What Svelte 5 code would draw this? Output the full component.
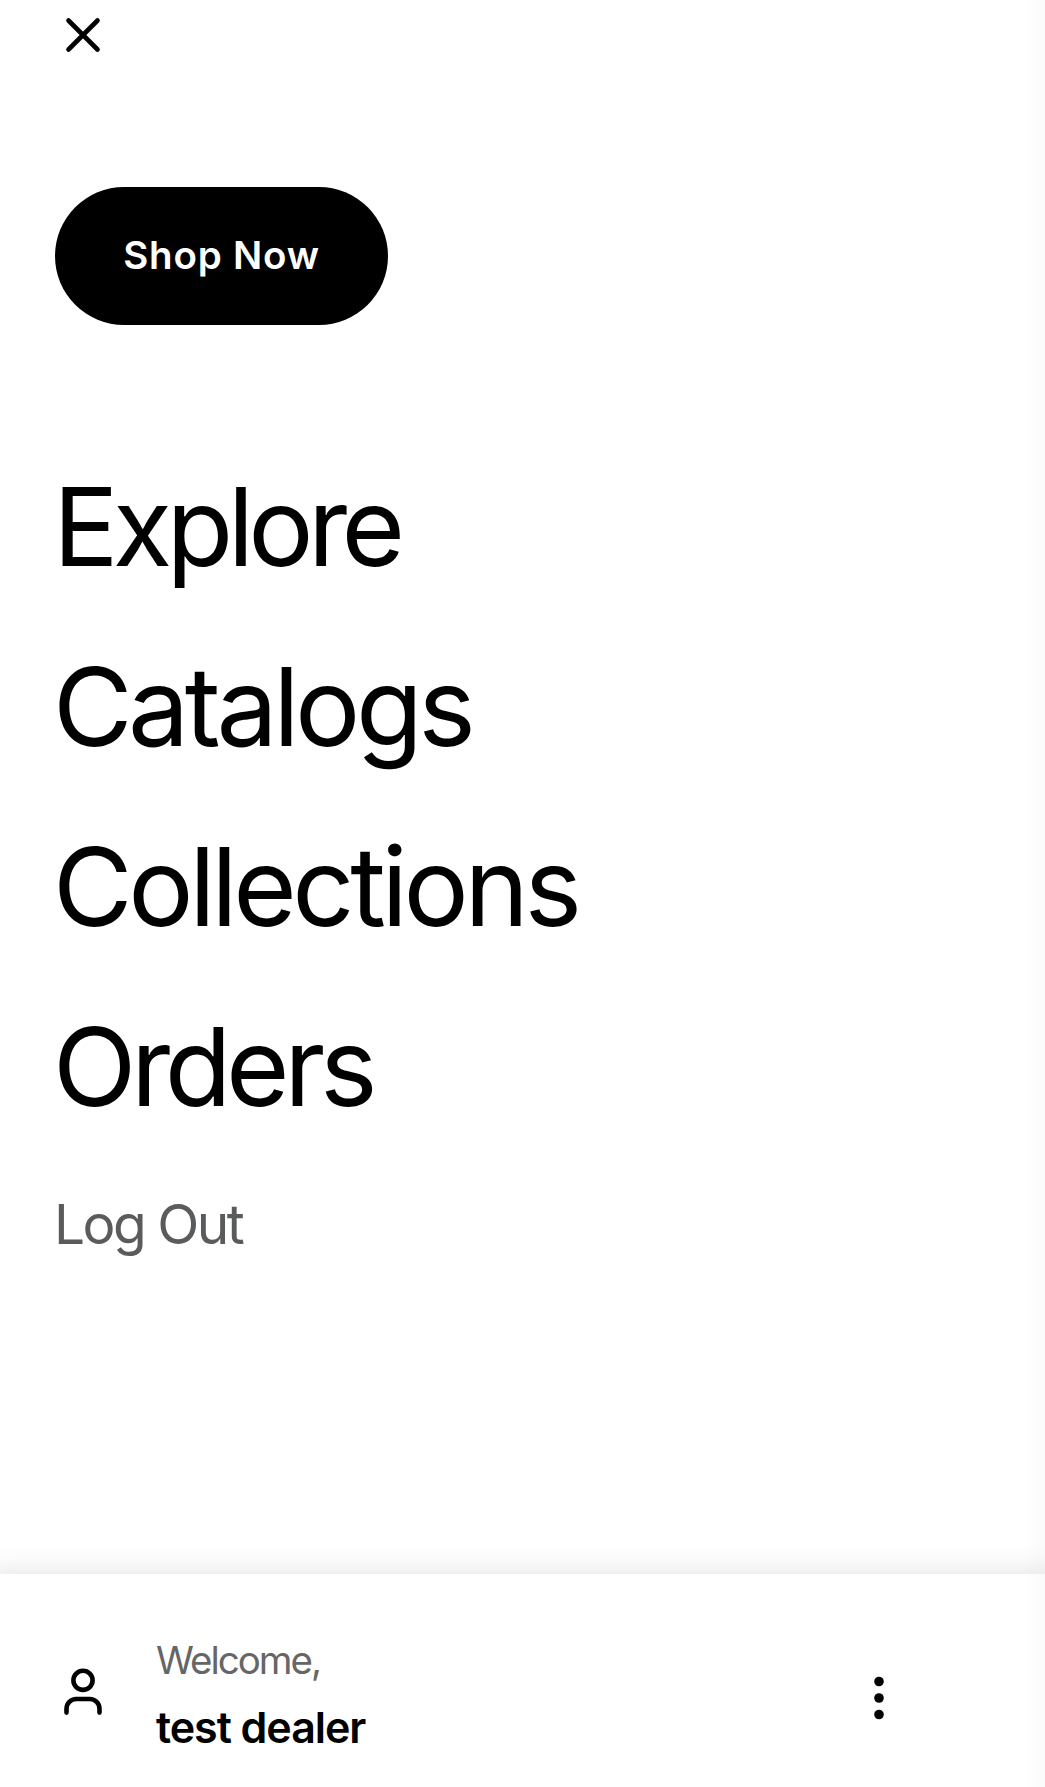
<script>
  const links = [
    { label: 'Explore', tracking: -5.7 },
    { label: 'Catalogs', tracking: -4.5 },
    { label: 'Collections', tracking: -4.4 },
    { label: 'Orders', tracking: -5.4 },
  ];
</script>

<div class="drawer">
  <header>
    <button class="icon" aria-label="Close menu">
      <svg width="66" height="66" viewBox="0 0 66 66" fill="none" stroke="#000" stroke-width="4.6" stroke-linecap="round">
        <path d="M18.5 18.5 47.5 47.5M47.5 18.5 18.5 47.5" />
      </svg>
    </button>
  </header>

  <main>
    <button class="shop"><span>Shop Now</span></button>
    <nav>
      {#each links as link}
        <a href="#{link.label.toLowerCase()}" style:letter-spacing="{link.tracking}px">{link.label}</a>
      {/each}
    </nav>
    <a class="logout" href="#logout">Log Out</a>
  </main>

  <footer>
    <svg class="user" width="66" height="66" viewBox="0 0 66 66" fill="none" stroke="#000" stroke-width="4.6" stroke-linecap="round">
      <circle cx="33" cy="20.3" r="9.6" />
      <path d="M16.5 52.6V48.7A9.7 9.7 0 0 1 26.2 39H39.8A9.7 9.7 0 0 1 49.5 48.7V52.6" />
    </svg>
    <div class="who">
      <span class="hello">Welcome,</span>
      <span class="name">test dealer</span>
    </div>
    <button class="icon more" aria-label="More options">
      <svg width="66" height="66" viewBox="0 0 66 66">
        <circle cx="33" cy="16.5" r="4.8" />
        <circle cx="33" cy="33" r="4.8" />
        <circle cx="33" cy="49.5" r="4.8" />
      </svg>
    </button>
  </footer>
  <div class="edge"></div>
</div>

<style>
  .drawer {
    position: relative;
    box-sizing: border-box;
    display: flex;
    flex-direction: column;
    height: 1787px;
    overflow: hidden;
    background: #fff;
    color: #000;
    font-family: Inter, 'Liberation Sans', sans-serif;
  }
  button {
    border: 0;
    padding: 0;
    background: none;
    font-family: inherit;
  }
  a {
    color: inherit;
    text-decoration: none;
  }
  svg {
    display: block;
  }
  header {
    padding: 2px 0 0 50px;
    height: 66px;
  }
  main {
    flex: 1;
    display: flex;
    flex-direction: column;
    align-items: flex-start;
    padding: 119px 55px 0;
  }
  .shop {
    width: 333px;
    height: 138px;
    padding-bottom: 2px;
    border-radius: 69px;
    background: #000;
    color: #fff;
    font-size: 38.5px;
    font-weight: 600;
    line-height: 136px;
    letter-spacing: 0.8px;
  }
  nav {
    display: flex;
    flex-direction: column;
    margin: 111px 0 0 -2px;
  }
  nav a {
    font-size: 109px;
    line-height: 180px;
  }
  .logout {
    margin: 35px 0 0 -1px;
    font-size: 55px;
    line-height: 66px;
    letter-spacing: -2.5px;
    color: #5a5b5c;
  }
  footer {
    display: flex;
    align-items: flex-start;
    height: 213px;
    background: #fff;
    box-shadow: 0 14px 28px 14px rgba(0, 0, 0, 0.13);
  }
  .user {
    margin: 86px 0 0 50px;
  }
  .who {
    display: flex;
    flex-direction: column;
    margin: 53px 0 0 40px;
  }
  .hello {
    font-size: 38.5px;
    line-height: 66px;
    letter-spacing: -2px;
    color: #666;
  }
  .name {
    font-size: 43px;
    font-weight: 600;
    line-height: 68px;
    letter-spacing: -1.05px;
  }
  .more {
    margin: 91px 133px 0 auto;
  }
  .edge {
    position: absolute;
    top: 0;
    right: 0;
    width: 20px;
    height: 100%;
    background: linear-gradient(to right, rgba(0, 0, 0, 0.005), rgba(0, 0, 0, 0.02));
  }
</style>
